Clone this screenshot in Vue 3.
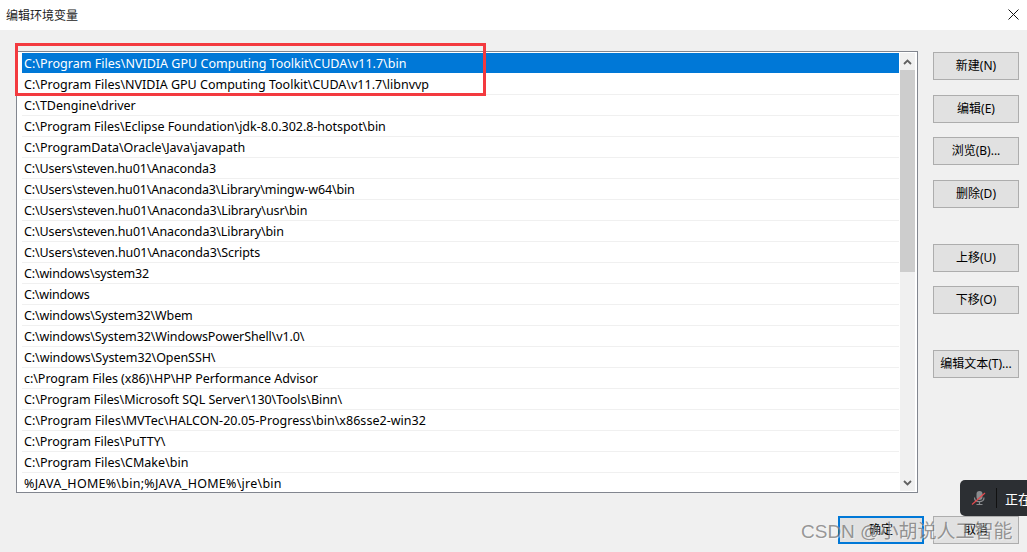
<script setup>
const rowData = [
  ['C:\\Program Files\\NVIDIA GPU Computing Toolkit\\CUDA\\v11.7\\bin', 1],
  ['C:\\Program Files\\NVIDIA GPU Computing Toolkit\\CUDA\\v11.7\\libnvvp', 0],
  ['C:\\TDengine\\driver', 0],
  ['C:\\Program Files\\Eclipse Foundation\\jdk-8.0.302.8-hotspot\\bin', -2],
  ['C:\\ProgramData\\Oracle\\Java\\javapath', 0],
  ['C:\\Users\\steven.hu01\\Anaconda3', -4],
  ['C:\\Users\\steven.hu01\\Anaconda3\\Library\\mingw-w64\\bin', -7],
  ['C:\\Users\\steven.hu01\\Anaconda3\\Library\\usr\\bin', -5],
  ['C:\\Users\\steven.hu01\\Anaconda3\\Library\\bin', -5],
  ['C:\\Users\\steven.hu01\\Anaconda3\\Scripts', -4],
  ['C:\\windows\\system32', -3],
  ['C:\\windows', -2],
  ['C:\\windows\\System32\\Wbem', -3],
  ['C:\\windows\\System32\\WindowsPowerShell\\v1.0\\', -5],
  ['C:\\windows\\System32\\OpenSSH\\', -2],
  ['c:\\Program Files (x86)\\HP\\HP Performance Advisor', -2],
  ['C:\\Program Files\\Microsoft SQL Server\\130\\Tools\\Binn\\', -3],
  ['C:\\Program Files\\MVTec\\HALCON-20.05-Progress\\bin\\x86sse2-win32', 2],
  ['C:\\Program Files\\PuTTY\\', -1],
  ['C:\\Program Files\\CMake\\bin', 0],
  ['%JAVA_HOME%\\bin;%JAVA_HOME%\\jre\\bin', 9],
]
// Per-row tracking compensates for the metric difference to the original UI font.
const rows = rowData.map(([text, delta]) => ({
  text,
  spacing: (delta / text.length).toFixed(3) + 'px',
}))
const groups = [
  [['新建(N)', 'b-new'], ['编辑(E)', 'b-edit'], ['浏览(B)...', 'b-browse'], ['删除(D)', 'b-del']],
  [['上移(U)', 'b-up'], ['下移(O)', 'b-down']],
  [['编辑文本(T)...', 'b-text']],
]
</script>

<template>
  <div class="dialog">
    <header class="titlebar">
      <span class="title">编辑环境变量</span>
      <svg class="close" width="11" height="11" viewBox="0 0 11 11"><path d="M0.5 0.5L10.5 10.5M10.5 0.5L0.5 10.5" stroke="#111" stroke-width="1" fill="none" /></svg>
    </header>
    <main class="body">
      <div class="content">
        <section class="list">
          <div class="rows">
            <div v-for="(r, i) in rows" :key="i" class="row" :class="{ selected: i === 0 }"><span class="cell" :style="{ letterSpacing: r.spacing }">{{ r.text }}</span></div>
          </div>
          <div class="scrollbar">
            <div class="arrow">
              <svg width="9" height="6" viewBox="0 0 9 6"><path d="M1 5L4.5 1.5L8 5" stroke="#606060" stroke-width="1.8" fill="none" /></svg>
            </div>
            <div class="thumb"></div>
            <div class="track"></div>
            <div class="arrow">
              <svg width="9" height="6" viewBox="0 0 9 6"><path d="M1 1L4.5 4.5L8 1" stroke="#606060" stroke-width="1.8" fill="none" /></svg>
            </div>
          </div>
        </section>
        <aside class="side">
          <div v-for="(g, gi) in groups" :key="gi" class="group" :class="'g' + gi">
            <button v-for="b in g" :key="b[1]" class="btn" :class="b[1]">{{ b[0] }}</button>
          </div>
        </aside>
      </div>
      <footer class="footer">
        <button class="btn primary">确定</button>
        <button class="btn">取消</button>
      </footer>
    </main>

    <div class="redbox"></div>
    <div class="toast">
      <svg width="16" height="16" viewBox="0 0 16 16">
        <rect x="5.5" y="1" width="6" height="9" rx="3" fill="#8a8c8f" />
        <path d="M3.5 7.5C3.5 13 13 13 13 7.5M8.5 11.5V14M5.5 14.5H11.5" stroke="#8a8c8f" stroke-width="1.2" fill="none" />
        <path d="M1 14.5L14 3" stroke="#e5484d" stroke-width="1.2" />
      </svg>
      <span class="divider"></span>
      <span class="toast-text">正在</span>
    </div>
    <div class="watermark">CSDN @小胡说人工智能</div>
  </div>
</template>

<style>
html, body { margin: 0; overflow: hidden; }
</style>

<style scoped>
.dialog {
  position: relative;
  width: 1027px;
  height: 552px;
  overflow: hidden;
  background: #f0f0f0;
  font-family: "Noto Sans", "Noto Sans CJK SC", sans-serif;
  font-size: 12px;
  color: #000;
}
.titlebar {
  height: 30px;
  background: #fff;
  display: flex;
  align-items: center;
  justify-content: space-between;
  padding: 0 5px 0 6px;
  box-sizing: border-box;
}
.title { font-size: 12px; color: #222; }
.close { margin-right: 3px; margin-top: -2px; }
.body {
  height: 522px;
  padding: 21px 8px 8px 16px;
  box-sizing: border-box;
  display: flex;
  flex-direction: column;
}
.content { display: flex; gap: 15px; align-items: flex-start; }
.list {
  width: 902px;
  height: 442px;
  box-sizing: border-box;
  border: 1px solid #82868f;
  background: #fff;
  display: flex;
  overflow: hidden;
  padding-top: 1px;
}
.rows { width: 877px; margin-left: 5px; flex: none; }
.row {
  height: 21px;
  box-sizing: border-box;
  border-bottom: 1px solid #f0f0f0;
  line-height: 22px;
  padding-left: 2px;
  white-space: nowrap;
}
.cell { display: inline-block; font-size: 12.5px; }
.row.selected { background: #0078d7; color: #fff; border-bottom-color: transparent; height: 20px; margin-bottom: 1px; }
.scrollbar {
  width: 15px;
  margin-left: 1px;
  height: 438px;
  background: #f0f0f0;
  display: flex;
  flex-direction: column;
}
.arrow { height: 17px; flex: none; display: flex; align-items: center; justify-content: center; }
.thumb { height: 202px; background: #cdcdcd; flex: none; }
.track { flex: 1; }
.side { width: 86px; }
.group { display: flex; flex-direction: column; }
.g0 { padding-top: 1px; }
.g1 { margin-top: 36px; gap: 14px; }
.g2 { margin-top: 36px; }
.b-edit { margin-top: 15px; }
.b-browse { margin-top: 14px; }
.b-del { margin-top: 15px; }
.btn {
  width: 86px;
  height: 28px;
  box-sizing: border-box;
  padding: 0 0 2px;
  border: 1px solid #adadad;
  background: #e1e1e1;
  font: inherit;
  font-size: 12px;
  color: #000;
}
.footer {
  margin-top: auto;
  display: flex;
  justify-content: flex-end;
  gap: 9px;
}
.primary { border: 2px solid #0078d7; }
.redbox {
  position: absolute;
  left: 15px;
  top: 43px;
  width: 471px;
  height: 53px;
  box-sizing: border-box;
  border: 3px solid #f33a3f;
}
.toast {
  position: absolute;
  left: 960px;
  top: 480px;
  width: 90px;
  height: 36px;
  background: #2c2f33;
  border-radius: 5px 0 0 5px;
  display: flex;
  align-items: center;
  padding-left: 11px;
  box-sizing: border-box;
  color: #fff;
  font-size: 13px;
}
.divider { width: 1px; height: 20px; background: #111; margin: 0 8px 0 9px; }
.toast-text { white-space: nowrap; }
.watermark {
  position: absolute;
  left: 801px;
  top: 520px;
  font-family: "Liberation Sans", "Noto Sans CJK SC", sans-serif;
  font-size: 19px;
  line-height: 24px;
  white-space: nowrap;
  color: rgba(90, 90, 90, 0.62);
  text-shadow: 1px 1px 1px rgba(255, 255, 255, 0.5);
}
</style>
